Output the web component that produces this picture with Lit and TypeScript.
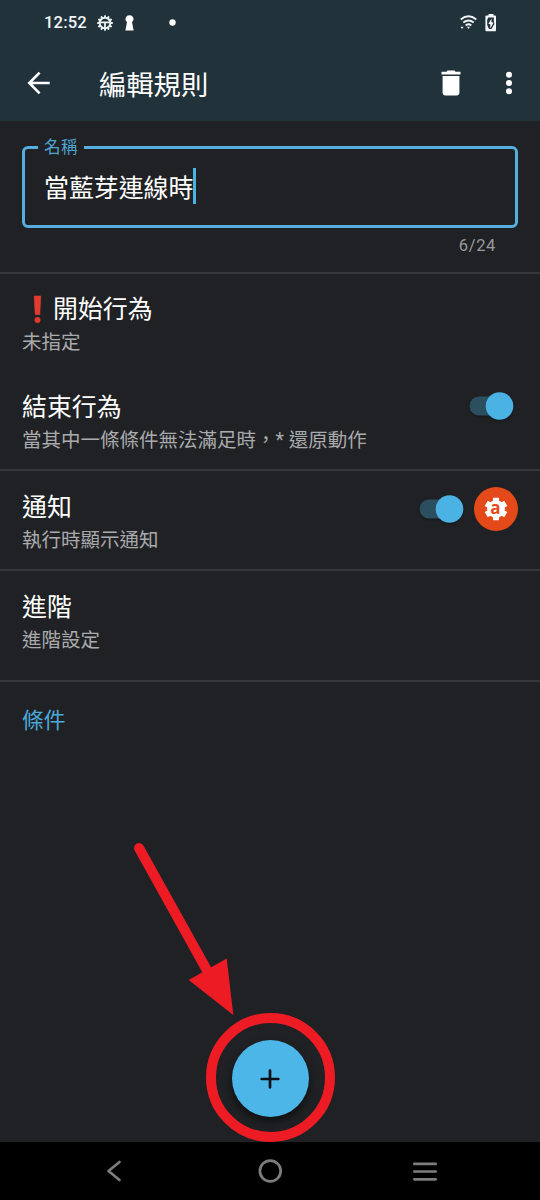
import { LitElement, html, css, svg } from "lit";
import { customElement, property } from "lit/decorators.js";

@customElement("toggle-switch")
class ToggleSwitch extends LitElement {
  static styles = css`
    :host { display: block; width: 44px; height: 30px; }
    svg { display: block; overflow: visible; filter: drop-shadow(0 1px 1px rgba(0, 0, 0, 0.35)); }
  `;
  render() {
    return html`<svg width="44" height="30" viewBox="0 0 44 30">
      <rect x="-.5" y="5.5" width="38" height="19" rx="9.5" fill="#2c4f60" />
      <circle cx="29.5" cy="15" r="13.8" fill="#4bb2e4" />
    </svg>`;
  }
}

@customElement("setting-row")
class SettingRow extends LitElement {
  @property() heading = "";
  @property() detail = "";
  static styles = css`
    :host { display: flex; align-items: flex-start; padding: 0 22px; box-sizing: border-box; }
    .text { flex: 1; }
    .title { display: flex; font-size: 24.9px; line-height: 34px; color: #fff; }
    .detail { font-size: 19.5px; line-height: 31px; color: #a9aaac; white-space: nowrap; }
  `;
  render() {
    return html`<div class="text">
        <div class="title"><slot name="mark"></slot>${this.heading}</div>
        <div class="detail">${this.detail}</div>
      </div>
      <slot></slot>`;
  }
}

const teeth = (n: number, r: number, w: number, h: number) =>
  Array.from({ length: n }, (_, i) =>
    svg`<rect x=${-w / 2} y=${-r} width=${w} height=${h} rx=".5" transform="rotate(${(i * 360) / n})" />`);

@customElement("app-root")
class AppRoot extends LitElement {
  static styles = css`
    :host {
      display: flex; flex-direction: column; position: relative;
      width: 540px; height: 1200px; overflow: hidden; background: #202124;
      font-family: Roboto, "Noto Sans CJK TC", sans-serif; color: #fff;
    }
    svg { display: block; flex: none; }
    .status {
      display: flex; align-items: center; height: 45px; box-sizing: border-box;
      padding: 0 43px 0 44px; background: #21323b;
    }
    .clock { font-size: 16.6px; line-height: 20px; font-weight: 500; letter-spacing: 0.15px; width: 53px; padding-top: 1px; color: #f2f6f7; }
    .person { margin-left: 12px; }
    .dot { margin-left: 35px; }
    .wifi { margin-left: auto; }
    .battery { margin-left: 8px; }
    .bar {
      display: flex; align-items: center; height: 76px; box-sizing: border-box;
      padding: 0 27px 0 27px; background: #21323b;
    }
    .bar h1 { margin: 6px auto 0 49px; font-size: 27.3px; line-height: 40px; font-weight: 400; }
    .more { margin-left: 44px; }
    .name { padding: 17px 22px 0; height: 151px; box-sizing: border-box; }
    fieldset {
      margin: 0; padding: 0 19px; border: 3px solid #55ade0; border-radius: 6px;
      height: 90px; box-sizing: border-box; min-width: 0;
    }
    legend { padding: 0 6px; margin-left: -6px; font-size: 16.6px; line-height: 19px; color: #4fa3cf; letter-spacing: 0.3px; }
    .value { display: flex; align-items: center; height: 48px; padding-top: 6px; font-size: 24.9px; line-height: 36px; }
    .caret { width: 3px; height: 36px; margin-top: -3px; background: #4bb2e4; }
    .value span { flex: none; }
    .entry { padding-top: 3px; }
    .count { text-align: right; padding-right: 22px; margin-top: 8px; font-size: 16.6px; line-height: 20px; color: #98999c; letter-spacing: 0.6px; }
    .line { height: 2px; background: #36373a; flex: none; }
    .start { height: 99px; padding-top: 19px; }
    .end { height: 96px; padding-top: 18px; }
    .notify { height: 98px; padding-top: 20px; }
    .advanced { height: 109px; padding-top: 20px; }
    .end toggle-switch { margin: 0 4px 0 0; }
    .notify toggle-switch { margin: 3px 10px 0 0; }
    .notify svg { margin-top: -4px; }
    .section { padding: 22px 22px 0; font-size: 21.8px; line-height: 34px; color: #4ba9da; }
    .action { margin-top: auto; height: 102px; display: flex; justify-content: center; align-items: flex-start; }
    .fab {
      width: 77px; height: 77px; border-radius: 50%; background: #4db6e8; display: grid; place-items: center;
      box-shadow: 0 5px 9px rgba(0, 0, 0, 0.5);
    }
    .nav { height: 58px; background: #000; flex: none; }
    .callout { position: absolute; left: 0; top: 0; pointer-events: none; }
  `;

  render() {
    return html`
      <div class="status">
        <span class="clock">12:52</span>
        <svg width="16" height="16" viewBox="-8 -8 16 16" fill="#edf3f5">
          ${teeth(12, 7.8, 1.9, 2.5)}
          <circle r="5.3" fill="none" stroke="#edf3f5" stroke-width="1.9" />
          <path d="M-5-1.5H5V.3H.9V5H-.9V.3H-5z" />
        </svg>
        <svg class="person" width="9" height="16" viewBox="0 0 9 16" fill="#fff">
          <path d="M4.5.2A3.8 3.8 0 0 1 7 7L8.6 15.5H.4L2 7A3.8 3.8 0 0 1 4.5.2z" />
        </svg>
        <svg class="dot" width="7" height="7" viewBox="0 0 7 7"><circle cx="3.5" cy="3.5" r="3.2" fill="#fff" /></svg>
        <svg class="wifi" width="17" height="15" viewBox="0 0 17 15" fill="none" stroke="#edf3f5" stroke-width="1.9">
          <path d="M.7 4.5Q8.5-1.9 16.3 4.5M3.3 7.6Q8.5 3.2 13.7 7.6M5.7 10.4Q8.5 8.2 11.3 10.4" />
          <path d="M.5 11.8H3.6L2 14zM7 11.8H10L8.5 14z" fill="#edf3f5" stroke="none" />
        </svg>
        <svg class="battery" width="12" height="19" viewBox="0 0 12 19">
          <path d="M3.5 1H8.5V2.5H10.2Q11 2.5 11 3.4V17.3Q11 18.2 10.2 18.2H1.3Q.4 18.2.4 17.3V3.4Q.4 2.5 1.3 2.5H3.5z" fill="#f3f7f8" />
          <path d="M3.2 4.5H8.8V8L9.4 11 6.5 16H4L2.2 12V7z" fill="#21323b" />
          <path d="M6.5 5.5L3.3 11H5.3V15.4L8.6 9.5H6.5z" fill="#fff" />
        </svg>
      </div>
      <div class="bar">
        <svg width="23" height="24" viewBox="0 0 23 24" fill="none" stroke="#fff" stroke-width="2.6">
          <path d="M22.7 12H2.7M12.6 1.6L2.3 12L12.6 22.4" />
        </svg>
        <h1>編輯規則</h1>
        <svg width="20" height="26" viewBox="0 0 20 26" fill="#fff">
          <path d="M.5 1.8H5.5L6.5.5H13.5L14.5 1.8H19.5V4.6H.5zM1.6 6H18.4V22.6Q18.4 25.5 15.5 25.5H4.5Q1.6 25.5 1.6 22.6z" />
        </svg>
        <svg class="more" width="8" height="24" viewBox="0 0 8 24" fill="#fff">
          <circle cx="4" cy="3.7" r="3" /><circle cx="4" cy="12" r="3" /><circle cx="4" cy="20.2" r="3" />
        </svg>
      </div>
      <div class="name">
        <fieldset>
          <legend>名稱</legend>
          <div class="value"><span class="entry">當藍芽連線時</span><span class="caret"></span></div>
        </fieldset>
        <div class="count">6/24</div>
      </div>
      <div class="line"></div>
      <setting-row class="start" heading="開始行為" detail="未指定">
        <svg slot="mark" width="31" height="34" viewBox="0 0 31 34">
          <path d="M12.2 3H18.8L17.8 21.5H13.2z" fill="#e23c30" stroke="#e23c30" stroke-width=".6" stroke-linejoin="round" />
          <circle cx="15.5" cy="27" r="3" fill="#dd3a31" />
        </svg>
      </setting-row>
      <setting-row class="end" heading="結束行為" detail="當其中一條條件無法滿足時，* 還原動作">
        <toggle-switch></toggle-switch>
      </setting-row>
      <div class="line"></div>
      <setting-row class="notify" heading="通知" detail="執行時顯示通知">
        <toggle-switch></toggle-switch>
        <svg width="44" height="44" viewBox="-22 -22 44 44">
          <circle r="22" fill="#e44a19" />
          <g fill="#fff">
            <circle r="8.9" />
            ${teeth(6, 11.3, 6, 5)}
          </g>
          <text x="-.5" y="4.6" text-anchor="middle" font-family="Open Sans" font-weight="700" font-size="17" fill="#e44a19">a</text>
        </svg>
      </setting-row>
      <div class="line"></div>
      <setting-row class="advanced" heading="進階" detail="進階設定"></setting-row>
      <div class="line"></div>
      <div class="section">條件</div>
      <div class="action">
        <div class="fab">
          <svg width="20" height="20" viewBox="0 0 20 20" stroke="#071016" stroke-width="2.7" stroke-linecap="round">
            <path d="M10 1.7V18.3M1.7 10H18.3" />
          </svg>
        </div>
      </div>
      <div class="nav">
        <svg width="540" height="58" viewBox="0 0 540 58" fill="none" stroke="#7d7d7d" stroke-width="2.7" stroke-linecap="round" stroke-linejoin="round">
          <path d="M119.5 20L108.5 29L119.5 38" />
          <circle cx="270.3" cy="29" r="10.4" />
          <path d="M414.3 21.8H435.7M414.3 29.5H435.7M414.3 37.3H435.7" />
        </svg>
      </div>
      <svg class="callout" width="540" height="1200" viewBox="0 0 540 1200" fill="none">
        <circle cx="270.5" cy="1077.5" r="59.5" stroke="#ed1c24" stroke-width="10" />
        <path d="M139 848L208.500 973" stroke="#ed1c24" stroke-width="10" stroke-linecap="round" />
        <path d="M188.700 980L226.700 958.500L233.300 1015z" fill="#ed1c24" />
      </svg>
    `;
  }
}
